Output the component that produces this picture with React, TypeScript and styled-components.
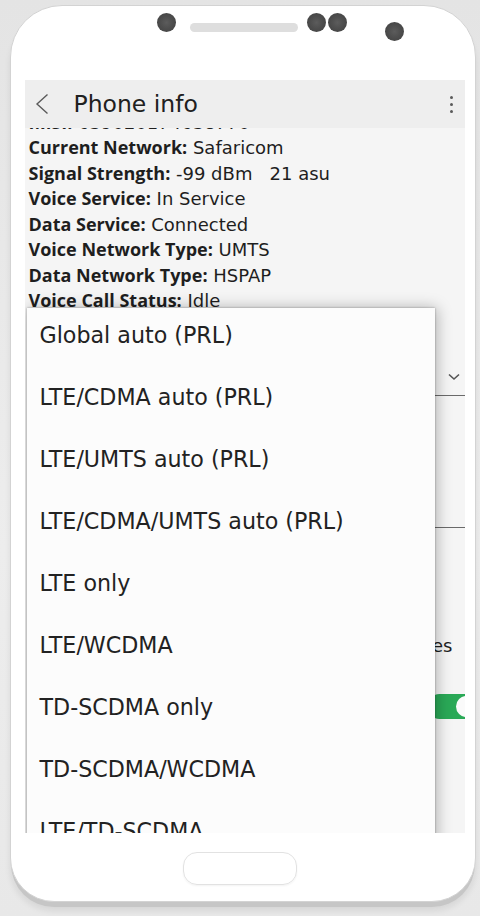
import React from "react";
import styled, { createGlobalStyle } from "styled-components";

const Global = createGlobalStyle`
  html, body { margin: 0; padding: 0; }
  body { font-family: "DejaVu Sans", "Open Sans", "Liberation Sans", Arial, sans-serif; background: #e9e9e9; }
`;

const Page = styled.div`
  width: 480px;
  height: 916px;
  overflow: hidden;
  box-sizing: border-box;
  padding: 5px 4px 0 10px;
  background: linear-gradient(180deg, #e4e4e4 0%, #ededed 60%, #e8e8e8 100%);
`;

const Phone = styled.div`
  width: 466px;
  height: 897px;
  box-sizing: border-box;
  background: #ffffff;
  border: 1.5px solid #d3d3d3;
  border-radius: 52px 52px 44px 44px;
  box-shadow: 0 6px 0 -1px #c6c6c6, 0 9px 6px rgba(0, 0, 0, 0.08);
  padding: 0 10.5px 0 13.5px;
  display: flex;
  flex-direction: column;
`;

const TopBezel = styled.div`
  height: 73.5px;
  flex: 0 0 auto;
  display: flex;
  align-items: flex-start;
  padding: 6.5px 0 0 132px;
  box-sizing: border-box;
`;

const Lens = styled.div<{ $gap: number; $top?: number }>`
  width: 19px;
  height: 19px;
  border-radius: 50%;
  margin-left: ${(p) => p.$gap}px;
  margin-top: ${(p) => p.$top ?? 0}px;
  background: radial-gradient(circle at 50% 50%, #5c5c5c 0%, #4e4e4e 45%, #3f3f3f 100%);
  flex: 0 0 auto;
`;

const Speaker = styled.div`
  width: 108px;
  height: 9px;
  border-radius: 5px;
  margin: 10px 0 0 14px;
  background: #dedede;
`;

const Screen = styled.div`
  flex: 0 0 753px;
  position: relative;
  overflow: hidden;
  background: #f5f5f5;
  display: flex;
  flex-direction: column;
`;

const AppBar = styled.div`
  position: relative;
  z-index: 1;
  height: 48px;
  flex: 0 0 auto;
  background: #eeeeee;
  display: flex;
  align-items: center;
  padding: 0 12px 0 10px;
`;

const Title = styled.div`
  margin-left: 25px;
  font-size: 23.5px;
  color: #202020;
  flex: 1;
`;

const Kebab = styled.div`
  display: flex;
  flex-direction: column;
  gap: 4px;
  padding-top: 2px;
  & > span {
    width: 3px;
    height: 3px;
    border-radius: 50%;
    background: #5a5a5a;
  }
`;

const InfoList = styled.div`
  margin-top: -18px;
  padding-left: 4px;
  display: flex;
  flex-direction: column;
`;

const InfoLine = styled.div`
  font-size: 18px;
  line-height: 25.5px;
  color: #1e1e1e;
  white-space: nowrap;
`;

const Label = styled.b`
  font-family: "Open Sans", "DejaVu Sans", sans-serif;
  font-weight: 700;
  line-height: 1;
`;

const Settings = styled.div`
  display: flex;
  flex-direction: column;
  padding: 7.5px 0 0 4px;
`;

const FieldLabel = styled.div<{ $top: number }>`
  font-size: 18px;
  line-height: 25.5px;
  color: #1e1e1e;
  margin-top: ${(p) => p.$top}px;
`;

const Select = styled.div`
  height: 36px;
  margin-top: 12px;
  display: flex;
  align-items: center;
  justify-content: space-between;
  border-bottom: 1.5px solid #6a6a6a;
  font-size: 18px;
  color: #1e1e1e;
  padding-right: 5px;
`;

const Input = styled.div<{ $top: number }>`
  height: 38px;
  margin-top: ${(p) => p.$top}px;
  border-bottom: 1.5px solid #6a6a6a;
  font-size: 18px;
  display: flex;
  align-items: center;
  color: #1e1e1e;
`;

const StatusRow = styled.div<{ $top: number }>`
  margin-top: ${(p) => p.$top}px;
  display: flex;
  justify-content: space-between;
  font-size: 18px;
  line-height: 25.5px;
  color: #1e1e1e;
  padding-right: 12px;
`;

const ToggleRow = styled.div<{ $top: number }>`
  margin-top: ${(p) => p.$top}px;
  display: flex;
  align-items: center;
  justify-content: space-between;
  font-size: 18px;
  line-height: 25px;
  color: #1e1e1e;
  margin-right: -14px;
`;

const Toggle = styled.div`
  width: 52px;
  height: 25px;
  border-radius: 13px;
  background: #2aa957;
  display: flex;
  justify-content: flex-end;
`;

const Knob = styled.div`
  width: 25px;
  height: 25px;
  box-sizing: border-box;
  border-radius: 50%;
  border: 2.5px solid #2aa957;
  background: #fafafa;
`;

const Dropdown = styled.div`
  position: absolute;
  z-index: 2;
  left: 2px;
  top: 228px;
  width: 408px;
  bottom: -60px;
  background: #fcfcfc;
  box-shadow: 0 0 2px rgba(0, 0, 0, 0.35), 2px 0 14px rgba(0, 0, 0, 0.28);
  display: flex;
  flex-direction: column;
`;

const Option = styled.div`
  height: 62px;
  flex: 0 0 auto;
  padding-left: 13px;
  font-size: 22.2px;
  line-height: 54px;
  color: #222;
  white-space: nowrap;
`;

const BottomBezel = styled.div`
  flex: 1;
  display: flex;
  justify-content: center;
  padding: 19px 9px 0 0;
`;

const HomeButton = styled.div`
  width: 112px;
  height: 31px;
  border: 1.5px solid #e2e2e2;
  border-radius: 14px;
  box-shadow: 0 1px 2px rgba(0, 0, 0, 0.05);
`;

const info: [string, string][] = [
  ["IMSI:", " 639020174638770"],
  ["Current Network:", " Safaricom"],
  ["Signal Strength:", " -99 dBm\u00a0\u00a0 21 asu"],
  ["Voice Service:", " In Service"],
  ["Data Service:", " Connected"],
  ["Voice Network Type:", " UMTS"],
  ["Data Network Type:", " HSPAP"],
  ["Voice Call Status:", " Idle"],
];

const options = [
  "Global auto (PRL)",
  "LTE/CDMA auto (PRL)",
  "LTE/UMTS auto (PRL)",
  "LTE/CDMA/UMTS auto (PRL)",
  "LTE only",
  "LTE/WCDMA",
  "TD-SCDMA only",
  "TD-SCDMA/WCDMA",
  "LTE/TD-SCDMA",
  "TD-SCDMA/GSM",
];

export default function App() {
  return (
    <>
      <Global />
      <Page>
        <Phone>
          <TopBezel>
            <Lens $gap={0} />
            <Speaker />
            <Lens $gap={9} />
            <Lens $gap={2} />
            <Lens $gap={38} $top={9} />
          </TopBezel>
          <Screen>
            <AppBar>
              <svg width="14" height="22" viewBox="0 0 14 22">
                <polyline points="12.5,1.5 2,11 12.5,20.5" fill="none" stroke="#5a5a5a" strokeWidth="1.4" />
              </svg>
              <Title>Phone info</Title>
              <Kebab>
                <span />
                <span />
                <span />
              </Kebab>
            </AppBar>
            <InfoList>
              {info.map(([k, v]) => (
                <InfoLine key={k}>
                  <Label>{k}</Label>
                  {v}
                </InfoLine>
              ))}
            </InfoList>
            <Settings>
              <FieldLabel $top={0}>Set Preferred Network Type:</FieldLabel>
              <Select>
                <span>WCDMA preferred</span>
                <svg width="12" height="8" viewBox="0 0 12 8">
                  <polyline points="1,1.5 6,6 11,1.5" fill="none" stroke="#555" strokeWidth="1.6" />
                </svg>
              </Select>
              <FieldLabel $top={46}>SMSC:</FieldLabel>
              <Input $top={22}>+254722500029</Input>
              <StatusRow $top={105}>
                <span>Radio Power</span>
                <span>Yes</span>
              </StatusRow>
              <ToggleRow $top={35}>
                <span>VoLTE Provisioned</span>
                <Toggle>
                  <Knob />
                </Toggle>
              </ToggleRow>
            </Settings>
            <Dropdown>
              {options.map((o) => (
                <Option key={o}>{o}</Option>
              ))}
            </Dropdown>
          </Screen>
          <BottomBezel>
            <HomeButton />
          </BottomBezel>
        </Phone>
      </Page>
    </>
  );
}
